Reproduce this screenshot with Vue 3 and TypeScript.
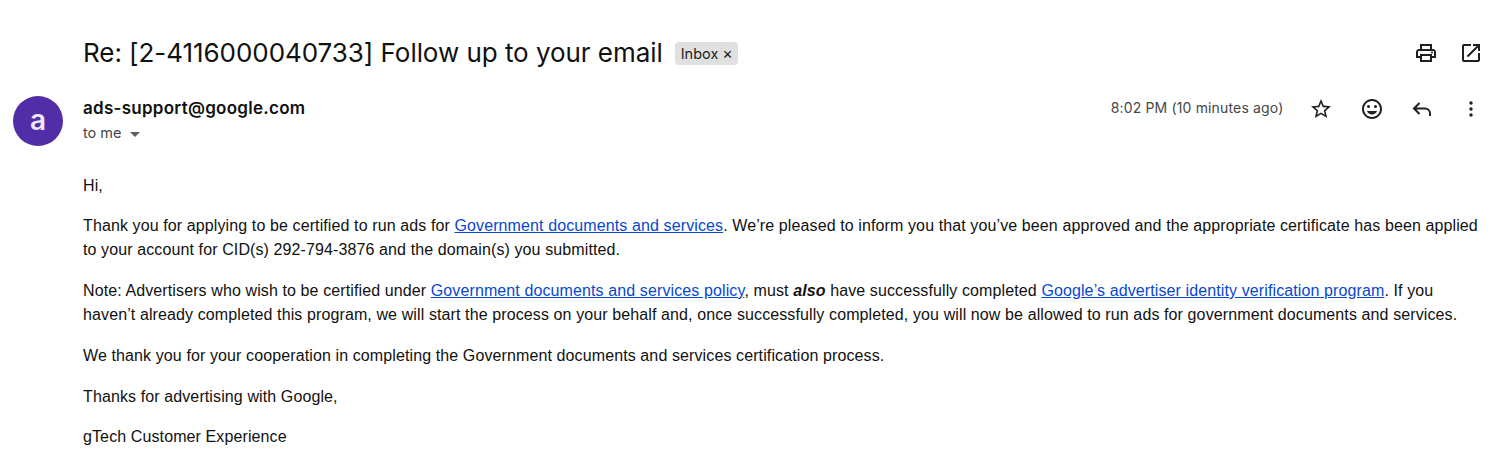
<script setup lang="ts">
const noop = (): void => {}
noop()
</script>

<template>
  <div class="mail">
    <header class="subject-row">
      <h1 class="subject">Re: [2-4116000040733] Follow up to your email</h1>
      <span class="chip">Inbox<span class="chip-x">×</span></span>
      <div class="subject-actions">
        <svg class="icon" viewBox="0 0 24 24"><path d="M19 8h-1V3H6v5H5c-1.66 0-3 1.34-3 3v6h4v4h12v-4h4v-6c0-1.66-1.34-3-3-3zM8 5h8v3H8V5zm8 12v2H8v-4h8v2zm2-2v-2H6v2H4v-4c0-.55.45-1 1-1h14c.55 0 1 .45 1 1v4h-2z"/><circle cx="18" cy="11.5" r="1"/></svg>
        <svg class="icon" viewBox="0 0 24 24"><path d="M19 19H5V5h7V3H5c-1.11 0-2 .9-2 2v14c0 1.1.89 2 2 2h14c1.1 0 2-.9 2-2v-7h-2v7zM14 3v2h3.59l-9.83 9.83 1.41 1.41L19 6.41V10h2V3h-7z"/></svg>
      </div>
    </header>

    <section class="sender-row">
      <div class="avatar">a</div>
      <div class="sender-main">
        <div class="sender-name">ads-support@google.com</div>
        <div class="to">to me <span class="caret"></span></div>
      </div>
      <div class="time">8:02 PM (10 minutes ago)</div>
      <div class="sender-actions">
        <svg class="icon" viewBox="0 0 24 24"><path d="M22 9.24l-7.19-.62L12 2 9.19 8.63 2 9.24l5.46 4.73L5.82 21 12 17.27 18.18 21l-1.63-7.03L22 9.24zM12 15.4l-3.76 2.27 1-4.28-3.32-2.88 4.38-.38L12 6.1l1.71 4.04 4.38.38-3.32 2.88 1 4.28L12 15.4z"/></svg>
        <svg class="icon" viewBox="0 0 24 24"><path d="M11.99 2C6.47 2 2 6.48 2 12s4.47 10 9.99 10C17.52 22 22 17.52 22 12S17.52 2 11.99 2zM12 20c-4.42 0-8-3.58-8-8s3.58-8 8-8 8 3.58 8 8-3.58 8-8 8z"/><circle cx="15.5" cy="9.5" r="1.5"/><circle cx="8.5" cy="9.5" r="1.5"/><path d="M12 17.5c2.33 0 4.31-1.46 5.11-3.5H6.89c.8 2.04 2.78 3.5 5.11 3.5z"/></svg>
        <svg class="icon" viewBox="0 0 24 24"><path class="stroke" d="M9.5 6 4 11.5l5.5 5.5M4 11.5h11a5 5 0 0 1 5 5V19"/></svg>
        <svg class="icon" viewBox="0 0 24 24"><circle cx="12" cy="6" r="1.7"/><circle cx="12" cy="12" r="1.7"/><circle cx="12" cy="18" r="1.7"/></svg>
      </div>
    </section>

    <article class="body">
      <p>Hi,</p>
      <p>Thank you for applying to be certified to run ads for <a href="#">Government documents and services</a>. We’re pleased to inform you that you’ve been approved and the appropriate certificate has been applied to your account for CID(s) 292-794-3876 and the domain(s) you submitted.</p>
      <p>Note: Advertisers who wish to be certified under <a href="#">Government documents and services policy</a>, must <b><i>also</i></b> have successfully completed <a href="#">Google’s advertiser identity verification program</a>. If you haven’t already completed this program, we will start the process on your behalf and, once successfully completed, you will now be allowed to run ads for government documents and services.</p>
      <p>We thank you for your cooperation in completing the Government documents and services certification process.</p>
      <p>Thanks for advertising with Google,</p>
      <p>gTech Customer Experience</p>
    </article>
  </div>
</template>

<style scoped>
.mail {
  width: 1499px;
  height: 458px;
  overflow: hidden;
  box-sizing: border-box;
  background: #fff;
  color: #1f1f1f;
  font-family: Inter, Roboto, "Liberation Sans", sans-serif;
}
.subject-row {
  display: flex;
  align-items: center;
  height: 32px;
  margin-top: 37px;
  padding: 0 16px 0 83px;
}
.subject {
  margin: 0;
  font-size: 26px;
  letter-spacing: -.05px;
  font-weight: 400;
  line-height: 32px;
  white-space: nowrap;
  color: #111;
}
.chip {
  display: flex;
  align-items: center;
  margin-left: 12px;
  height: 23px;
  padding: 0 5px 0 6px;
  border-radius: 4px;
  background: #dfe1e0;
  font-size: 14.5px;
  color: #222;
}
.chip-x {
  margin-left: 4px;
  font-size: 16px;
  line-height: 22px;
}
.subject-actions {
  margin-left: auto;
  display: flex;
  gap: 21px;
}
.icon {
  display: block;
  width: 24px;
  height: 24px;
  fill: #1f1f1f;
  flex: none;
}
.stroke {
  fill: none;
  stroke: #1f1f1f;
  stroke-width: 2;
}
.sender-row {
  display: flex;
  align-items: flex-start;
  margin-top: 27px;
  padding: 0 16px 0 13px;
}
.avatar {
  width: 50px;
  height: 50px;
  border-radius: 50%;
  background: #512da8;
  color: #ede7f6;
  font-size: 28px;
  font-weight: 600;
  line-height: 48px;
  text-align: center;
  flex: none;
}
.sender-main {
  margin-left: 20px;
  flex: 1;
}
.sender-name {
  margin-top: 1px;
  font-size: 17px;
  font-weight: 600;
  letter-spacing: .27px;
  line-height: 22px;
  color: #111;
}
.to {
  margin-top: 4px;
  font-size: 14.5px;
  line-height: 20px;
  color: #444746;
}
.caret {
  display: inline-block;
  margin-left: 4px;
  vertical-align: 1px;
  border: 5px solid transparent;
  border-top-color: #5e5e5e;
  border-bottom: 0;
}
.time {
  font-size: 14px;
  letter-spacing: .16px;
  line-height: 24px;
  color: #444746;
}
.sender-actions {
  display: flex;
  gap: 26.5px;
  margin-left: 25px;
  margin-top: 1px;
}
.sender-actions .icon:nth-child(1) { margin-right: .5px; }
.sender-actions .icon:nth-child(2) { margin-right: -.5px; }
.sender-actions .icon:nth-child(3) { margin-right: -1px; }
.body {
  margin-top: 27.5px;
  padding: 0 16px 0 83px;
  font-family: "Liberation Sans", Arial, sans-serif;
  font-size: 16px;
  letter-spacing: .11px;
  line-height: 24px;
  color: #111;
}
.body p {
  margin: 0 0 16.75px;
}
.body a {
  color: #0747d1;
  text-decoration: underline;
}
</style>

<style>
html, body { background: #fff; }
</style>
